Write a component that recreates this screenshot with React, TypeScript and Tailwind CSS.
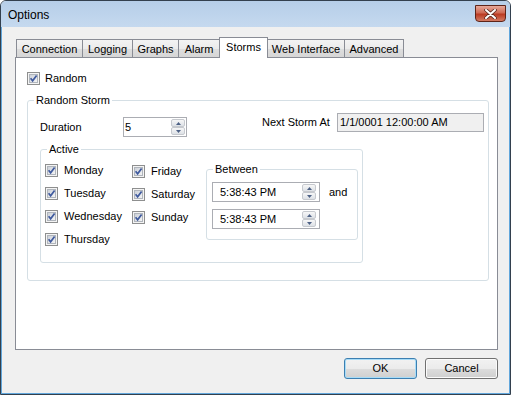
import React from "react";

const tabs = [
  { name: "Connection", w: "w-[67px]" },
  { name: "Logging", w: "w-[51px]" },
  { name: "Graphs", w: "w-[47px]" },
  { name: "Alarm", w: "w-[42px]" },
  { name: "Storms", w: "w-[49px]", active: true },
  { name: "Web Interface", w: "w-[78px]" },
  { name: "Advanced", w: "w-[60px]" },
];

function CheckBox({ label, gap = "gap-[6px]" }: { label: string; gap?: string }) {
  return (
    <div className={"flex items-center h-[13px] " + gap}>
      <svg width="13" height="13" viewBox="0 0 13 13" className="shrink-0">
        <defs>
          <linearGradient id="cbfill" x1="0" y1="0" x2="1" y2="1">
            <stop offset="0" stopColor="#c9ced6" />
            <stop offset="1" stopColor="#f7f7f7" />
          </linearGradient>
        </defs>
        <rect x="0.5" y="0.5" width="12" height="12" fill="#f4f4f4" stroke="#8e8f8f" />
        <rect x="2.5" y="2.5" width="8" height="8" fill="url(#cbfill)" stroke="#b0b5bc" />
        <path d="M3.6 6.3 L5.6 8.8 L9.6 3.4" fill="none" stroke="#3f5a9e" strokeWidth="1.7" />
      </svg>
      <span className="leading-[13px]">{label}</span>
    </div>
  );
}

function Arrow({ up }: { up?: boolean }) {
  return (
    <div className="h-[8px] flex items-center justify-center rounded-[2px] border border-[#c6c9ce] bg-[linear-gradient(to_bottom,#f7f7f7,#dde1e6)]">
      <svg width="5" height="3" viewBox="0 0 5 3">
        <path d={up ? "M2.5 0 L5 3 L0 3Z" : "M0 0 L5 0 L2.5 3Z"} fill="#4d6185" />
      </svg>
    </div>
  );
}

function Spin({ value, w, pl, mr }: { value: string; w: string; pl: string; mr: string }) {
  return (
    <div className={"h-[20px] border border-[#abadb3] bg-white flex items-center " + w}>
      <span className={"flex-1 leading-[13px] " + pl}>{value}</span>
      <div className={"flex flex-col w-[14px] " + mr}>
        <Arrow up />
        <Arrow />
      </div>
    </div>
  );
}

function Group({ title, className, children }: { title: string; className: string; children: React.ReactNode }) {
  return (
    <div className={"relative border border-[#d5dfe5] rounded-[3px] " + className}>
      <span className="absolute -top-[7px] left-[6px] px-[2px] bg-white leading-[13px]">{title}</span>
      {children}
    </div>
  );
}

export default function App() {
  return (
    <div className="w-[511px] h-[395px] flex flex-col border border-[#33404e] rounded-t-[6px] bg-[#f0f0f0] text-[11px] text-black font-['Liberation_Sans',Arial,sans-serif]">
      <div className="h-[26px] shrink-0 flex items-center pl-[7px] pr-[4px] rounded-t-[5px] bg-[linear-gradient(to_bottom,#b6cee8,#c5d9ef)]">
        <span className="text-[12px] leading-[14px] mt-[2px]">Options</span>
        <div className="ml-auto self-start mt-[4px] w-[31px] h-[17px] flex items-center justify-center border border-[#5e2418] rounded-b-[4px] bg-[linear-gradient(to_bottom,#e6a899,#cf6a55_45%,#bb3a22_55%,#d27a63)]">
          <svg width="13" height="10" viewBox="0 0 13 10">
            <path d="M2 1 L11 9 M11 1 L2 9" stroke="#5a2a22" strokeWidth="3.6" strokeLinecap="round" />
            <path d="M2 1 L11 9 M11 1 L2 9" stroke="#ffffff" strokeWidth="2" strokeLinecap="round" />
          </svg>
        </div>
      </div>

      <div className="flex-1 flex flex-col border-x border-b border-[#62a7dc]">
        <div className="flex items-end pt-[10px] pl-[14px]">
          {tabs.map((t, i) =>
            t.active ? (
              <div
                key={t.name}
                className={"relative z-10 -ml-px -mb-px h-[21px] flex justify-center pt-[3px] border border-b-0 border-[#898c95] bg-white leading-[13px] " + t.w}
              >
                {t.name}
              </div>
            ) : (
              <div
                key={t.name}
                className={
                  "h-[18px] flex items-center justify-center pt-[2px] border border-b-0 border-[#898c95] bg-[linear-gradient(to_bottom,#f3f3f3,#ebebeb_50%,#dedede_50%,#d6d6d6)] leading-[13px] " +
                  (i === 0 ? "" : "-ml-px ") +
                  t.w
                }
              >
                {t.name}
              </div>
            )
          )}
        </div>

        <div className="ml-[13px] w-[483px] h-[293px] border border-[#898c95] bg-white">
          <div className="mt-[14px] ml-[11px]">
            <CheckBox label="Random" gap="gap-[5px]" />
          </div>

          <Group title="Random Storm" className="mt-[15px] ml-[11px] w-[462px] h-[181px]">
            <div className="flex items-start">
              <div className="ml-[12px] mt-[16px] flex items-center">
                <span className="w-[83px]">Duration</span>
                <Spin value="5" w="w-[64px]" pl="pl-[1px]" mr="mr-[1px]" />
              </div>
              <div className="ml-[75px] mt-[12px] flex items-center">
                <span className="w-[75px]">Next Storm At</span>
                <div className="w-[147px] h-[19px] flex items-center pl-[2px] border border-[#abadb3] bg-[#f0f0f0]">
                  1/1/0001 12:00:00 AM
                </div>
              </div>
            </div>

            <Group title="Active" className="ml-[12px] mt-[12px] w-[323px] h-[114px]">
              <div className="flex items-start">
                <div className="ml-[4px] mt-[14px] w-[87px] flex flex-col gap-[10px]">
                  <CheckBox label="Monday" />
                  <CheckBox label="Tuesday" />
                  <CheckBox label="Wednesday" />
                  <CheckBox label="Thursday" />
                </div>
                <div className="mt-[15px] w-[74px] flex flex-col gap-[10px]">
                  <CheckBox label="Friday" />
                  <CheckBox label="Saturday" />
                  <CheckBox label="Sunday" />
                </div>
                <Group title="Between" className="mt-[19px] w-[152px] h-[71px]">
                  <div className="pl-[5px] pt-[12px]">
                    <div className="flex items-center">
                      <Spin value="5:38:43 PM" w="w-[108px]" pl="pl-[7px]" mr="mr-[3px]" />
                      <span className="ml-[9px]">and</span>
                    </div>
                    <div className="mt-[7px]">
                      <Spin value="5:38:43 PM" w="w-[108px]" pl="pl-[7px]" mr="mr-[3px]" />
                    </div>
                  </div>
                </Group>
              </div>
            </Group>
          </Group>
        </div>

        <div className="flex justify-end gap-[8px] pr-[11px] mt-[8px]">
          <button className="w-[73px] h-[21px] rounded-[3px] border border-[#3c7fb1] shadow-[inset_0_0_0_1px_#a8dcf7] bg-[linear-gradient(to_bottom,#f2f2f2,#ebebeb_50%,#dddddd_50%,#cfcfcf)] leading-[13px]">
            OK
          </button>
          <button className="w-[73px] h-[21px] rounded-[3px] border border-[#707070] shadow-[inset_0_0_0_1px_#fbfbfb] bg-[linear-gradient(to_bottom,#f2f2f2,#ebebeb_50%,#dddddd_50%,#cfcfcf)] leading-[13px]">
            Cancel
          </button>
        </div>
      </div>
    </div>
  );
}
